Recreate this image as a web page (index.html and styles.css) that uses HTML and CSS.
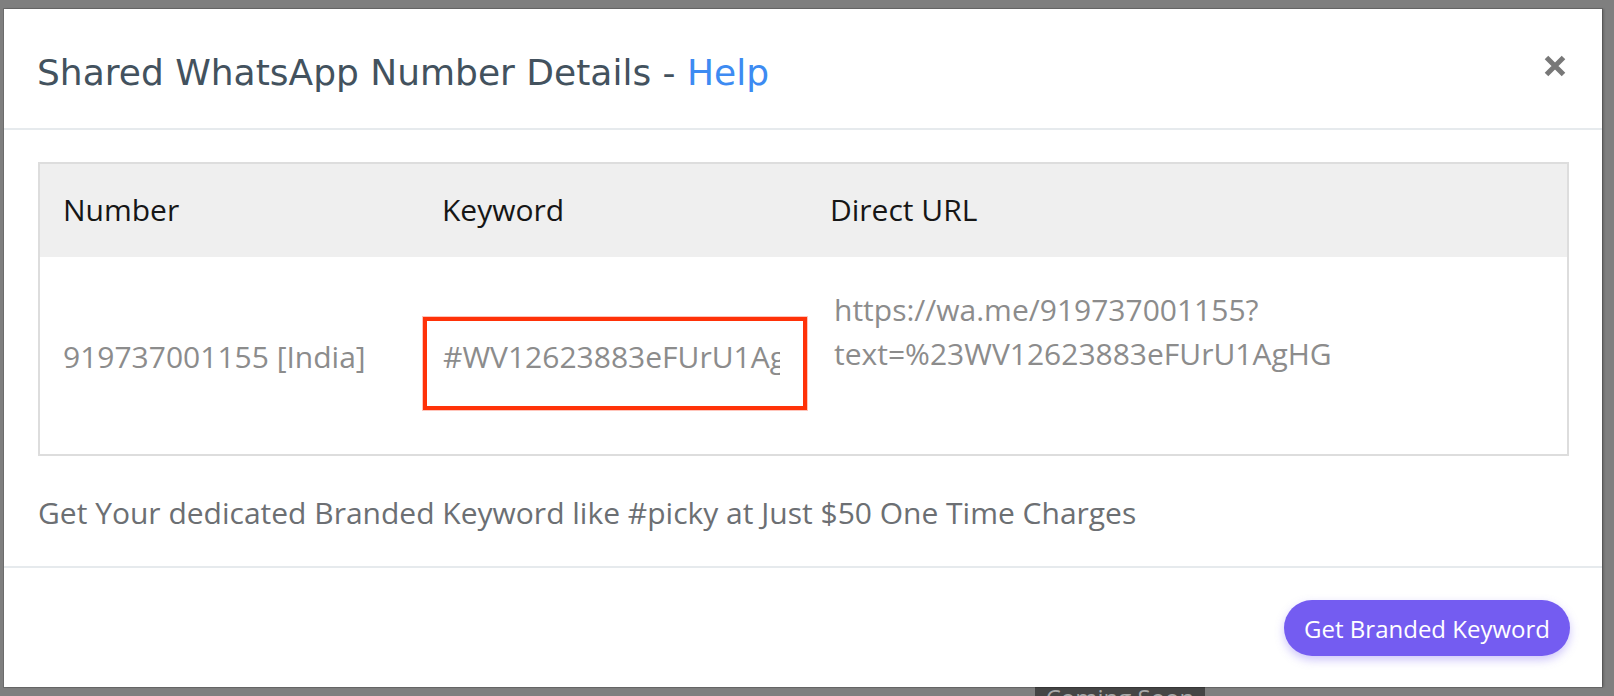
FILE: index.html
```html
<!DOCTYPE html>
<html>
<head>
    <link rel="stylesheet" href="styles.css">
</head>
<body>
    <div class="page-behind">
        <span class="coming-soon">Coming Soon</span>
    </div>

    <div class="modal">
        <div class="modal-header">
            <h4 class="modal-title">Shared WhatsApp Number Details - <a href="#" class="help-link">Help</a></h4>
            <button class="close" aria-label="Close">
                <svg width="22" height="22" viewBox="0 0 22 22">
                    <path d="M2.5 2.5 L19.5 19.5 M19.5 2.5 L2.5 19.5" stroke="#787878" stroke-width="5" fill="none"/>
                </svg>
            </button>
        </div>

        <div class="modal-body">
            <table class="number-table">
                <thead>
                    <tr>
                        <th class="col-number">Number</th>
                        <th class="col-keyword">Keyword</th>
                        <th>Direct URL</th>
                    </tr>
                </thead>
                <tbody>
                    <tr class="data-row">
                        <td class="cell-number">919737001155 [India]</td>
                        <td class="cell-keyword">
                            <div class="keyword-box"><span class="keyword-text">#WV12623883eFUrU1AgHG</span></div>
                        </td>
                        <td class="cell-url">https://wa.me/919737001155?<br>text=%23WV12623883eFUrU1AgHG</td>
                    </tr>
                </tbody>
            </table>

            <p class="branded-note">Get Your dedicated Branded Keyword like #picky at Just $50 One Time Charges</p>
        </div>

        <div class="modal-footer">
            <button class="btn-branded">Get Branded Keyword</button>
        </div>
    </div>
</body>
</html>
```

FILE: styles.css
```css
html, body {
    margin: 0;
    height: 696px;
    overflow: hidden;
}
body {
    background: #7f7f7f;
    font-family: 'Open Sans', 'Liberation Sans', sans-serif;
    padding: 9px 12px 0 4px;
    box-sizing: border-box;
    position: relative;
}

/* page sitting under the overlay */
.page-behind { position: absolute; inset: 0; }
.coming-soon {
    position: absolute;
    left: 1035px;
    top: 687px;
    width: 170px;
    height: 30px;
    background: #454545;
    color: #a8a8a8;
    font-size: 24px;
    line-height: 22px;
    text-align: center;
}

.modal {
    position: relative;
    background: #fff;
    width: 1598px;
    height: 678px;
    box-shadow: 0 0 0 1px rgba(0, 0, 0, 0.15), 2px 0 2px rgba(0, 0, 0, 0.2);
}

.modal-header {
    display: flex;
    align-items: flex-start;
    justify-content: space-between;
    padding: 43px 36px 34px 33px;
    border-bottom: 2px solid #e6eaed;
}
.modal-title {
    margin: 0;
    font-family: 'DejaVu Sans', sans-serif;
    font-weight: normal;
    font-size: 36px;
    line-height: 42px;
    color: #43525e;
}
.help-link { color: #3d8bf2; text-decoration: none; }
.close {
    margin-top: 3px;
    padding: 0;
    border: none;
    background: none;
    width: 22px;
    height: 22px;
    cursor: pointer;
}
.close svg { display: block; }

.modal-body {
    padding: 32px 33px 32px 34px;
    border-bottom: 2px solid #e6eaed;
}

.number-table {
    width: 100%;
    table-layout: fixed;
    border-collapse: separate;
    border-spacing: 0;
    border: 2px solid #dddddd;
    font-size: 30px;
    line-height: 42px;
}
.number-table th {
    background: #efefef;
    color: #161616;
    font-weight: normal;
    text-align: left;
    padding: 25px 21px 26px 23px;
    box-sizing: border-box;
}
.col-number { width: 379px; }
.col-keyword { width: 388px; }

.data-row { height: 197px; }
.data-row td {
    vertical-align: top;
    color: #8c8c8c;
    padding: 0 21px 0 23px;
}
.data-row .cell-number { padding-top: 79px; }
.data-row .cell-keyword { padding: 60px 0 0 4px; }
.data-row .cell-url { padding: 31px 21px 0 27px; line-height: 44px; }

.keyword-box {
    box-sizing: border-box;
    width: 384px;
    height: 93px;
    border: 4px solid #ff3208;
    box-shadow: 0 0 0 1px rgba(255, 90, 60, 0.35);
    padding: 15px 23px 28px 16px;
}
.keyword-text {
    display: block;
    white-space: nowrap;
    overflow: hidden;
}

.branded-note {
    margin: 36px 0 0;
    font-size: 30px;
    line-height: 42px;
    color: #6c6f73;
}

.modal-footer {
    display: flex;
    justify-content: flex-end;
    padding: 32px 32px 31px;
}
.btn-branded {
    height: 56px;
    padding: 0 20px;
    border: none;
    border-radius: 28px;
    background: #745cf1;
    color: #fff;
    font-family: 'Open Sans', sans-serif;
    font-size: 24px;
    box-shadow: 0 4px 10px rgba(116, 92, 241, 0.35);
    cursor: pointer;
}
```
